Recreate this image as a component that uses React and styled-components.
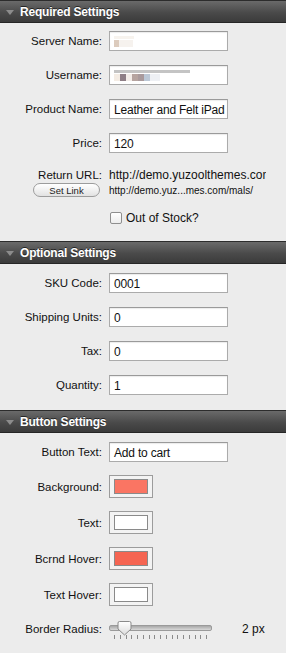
import React from "react";
import styled, { createGlobalStyle } from "styled-components";

const Global = createGlobalStyle`
  html, body {
    margin: 0;
    padding: 0;
    background: #ececec;
  }
  body {
    font-family: "Liberation Sans", Arial, sans-serif;
    color: #111;
  }
`;

const Panel = styled.div`
  width: 286px;
  min-height: 653px;
  background: #ececec;
`;

const Header = styled.div`
  display: flex;
  align-items: center;
  gap: 6px;
  height: 21px;
  padding-left: 6px;
  border-top: 1px solid #2c2c2c;
  border-bottom: 1px solid #262626;
  background: linear-gradient(#6a6a6a, #4a4a4a 55%, #3b3b3b);
  color: #fff;
  font-weight: bold;
  font-size: 12px;
  letter-spacing: -0.2px;
  text-shadow: 0 -1px 0 rgba(0, 0, 0, 0.6);
`;

const Triangle = styled.span`
  width: 0;
  height: 0;
  border-left: 4px solid transparent;
  border-right: 4px solid transparent;
  border-top: 5px solid #8c8c8c;
  margin-top: 1px;
`;

const Body = styled.div`
  display: flex;
  flex-direction: column;
  gap: ${({ gap }) => gap || 14}px;
  padding: ${({ top }) => top || 9}px 0 ${({ bottom }) => bottom || 15}px;
`;

const Row = styled.div`
  display: grid;
  grid-template-columns: 102px auto;
  column-gap: 7px;
  align-items: center;
`;

const Label = styled.div`
  text-align: right;
  font-size: 11.5px;
  white-space: nowrap;
`;

const Field = styled.div`
  box-sizing: border-box;
  width: 119px;
  height: 20px;
  display: flex;
  align-items: center;
  padding: 1px 3px 0 4px;
  background: #fff;
  border: 1px solid #ababab;
  border-top-color: #9a9a9a;
  box-shadow: inset 0 1px 1px rgba(0, 0, 0, 0.08);
  font-size: 12px;
  letter-spacing: -0.2px;
  color: #111;
  white-space: nowrap;
  overflow: hidden;
`;

const Pixel = styled.span`
  display: inline-block;
  width: ${({ w }) => w || 6}px;
  height: ${({ h }) => h || 8}px;
  background: ${({ c }) => c};
`;

const Censor = styled.div`
  display: flex;
  flex-direction: column;
  gap: 1px;
`;

const PixelRow = styled.div`
  display: flex;
`;

const UrlGrid = styled.div`
  display: grid;
  grid-template-columns: 102px 157px;
  grid-template-rows: 16px 14px;
  column-gap: 7px;
  align-items: center;
`;

const BigUrl = styled.div`
  font-size: 12px;
  white-space: nowrap;
  overflow: hidden;
`;

const SmallUrl = styled.div`
  font-size: 10px;
  white-space: nowrap;
`;

const PillButton = styled.div`
  justify-self: end;
  margin-right: 2px;
  box-sizing: border-box;
  width: 67px;
  height: 14px;
  border-radius: 7px;
  border: 1px solid #9c9c9c;
  background: linear-gradient(#ffffff, #f1f1f1 50%, #e2e2e2);
  font-size: 9.5px;
  display: flex;
  align-items: center;
  justify-content: center;
  color: #222;
`;

const CheckRow = styled.label`
  display: flex;
  align-items: center;
  gap: 4px;
  margin-left: 110px;
  font-size: 12px;
`;

const CheckBox = styled.span`
  box-sizing: border-box;
  width: 12px;
  height: 12px;
  border-radius: 2px;
  border: 1px solid #8e8e8e;
  background: linear-gradient(#ffffff, #ececec);
`;

const Well = styled.div`
  box-sizing: border-box;
  width: 44px;
  height: 23px;
  border: 1px solid #9c9c9c;
  background: #f3f3f3;
  display: flex;
  align-items: center;
  justify-content: center;
`;

const Swatch = styled.div`
  box-sizing: border-box;
  width: 34px;
  height: 15px;
  border: 1px solid #8a8a8a;
  background: ${({ color }) => color};
`;

const SliderWrap = styled.div`
  display: flex;
  align-items: center;
  gap: 30px;
`;

const Slider = styled.div`
  position: relative;
  width: 103px;
  height: 20px;
`;

const Track = styled.div`
  position: absolute;
  left: 0;
  right: 0;
  top: 6px;
  height: 4px;
  border-radius: 2px;
  border: 1px solid #9a9a9a;
  background: linear-gradient(#a8a8a8, #d8d8d8);
`;

const Thumb = styled.svg`
  position: absolute;
  left: 8px;
  top: 2px;
`;

const Ticks = styled.div`
  position: absolute;
  left: 5px;
  top: 16px;
  width: 93px;
  display: flex;
  justify-content: space-between;
`;

const Tick = styled.span`
  width: 1px;
  height: 4px;
  background: #8a8a8a;
`;

const Value = styled.div`
  font-size: 12px;
`;

const FieldRow = ({ label, children }) => (
  <Row>
    <Label>{label}</Label>
    <Field>{children}</Field>
  </Row>
);

const ColorRow = ({ label, color }) => (
  <Row>
    <Label>{label}</Label>
    <Well>
      <Swatch color={color} />
    </Well>
  </Row>
);

const Section = ({ title }) => (
  <Header>
    <Triangle />
    {title}
  </Header>
);

export default function App() {
  return (
    <Panel>
      <Global />
      <Section title="Required Settings" />
      <Body top={8} bottom={16}>
        <FieldRow label="Server Name:">
          <Censor>
            <PixelRow>
              <Pixel c="#f7f3ee" w={20} h={3} />
            </PixelRow>
            <PixelRow>
              <Pixel c="#dccbbd" w={5} h={7} />
              <Pixel c="#f6f2ee" w={14} h={7} />
            </PixelRow>
          </Censor>
        </FieldRow>
        <FieldRow label="Username:">
          <Censor>
            <PixelRow>
              <Pixel c="#c4c4c4" w={76} h={3} />
            </PixelRow>
            <PixelRow>
              <Pixel c="#f4ece4" w={6} h={7} />
              <Pixel c="#8e7e86" w={6} h={7} />
              <Pixel c="#f2ece8" w={6} h={7} />
              <Pixel c="#b6a4a0" w={6} h={7} />
              <Pixel c="#a99a9c" w={6} h={7} />
              <Pixel c="#bcc8d6" w={6} h={7} />
              <Pixel c="#eef0f4" w={10} h={7} />
            </PixelRow>
          </Censor>
        </FieldRow>
        <FieldRow label="Product Name:">Leather and Felt iPad</FieldRow>
        <FieldRow label="Price:">120</FieldRow>
        <UrlGrid>
          <Label>Return URL:</Label>
          <BigUrl>http://demo.yuzoolthemes.com/mals/</BigUrl>
          <PillButton>Set Link</PillButton>
          <SmallUrl>http://demo.yuz...mes.com/mals/</SmallUrl>
        </UrlGrid>
        <CheckRow>
          <CheckBox />
          Out of Stock?
        </CheckRow>
      </Body>

      <Section title="Optional Settings" />
      <Body>
        <FieldRow label="SKU Code:">0001</FieldRow>
        <FieldRow label="Shipping Units:">0</FieldRow>
        <FieldRow label="Tax:">0</FieldRow>
        <FieldRow label="Quantity:">1</FieldRow>
      </Body>

      <Section title="Button Settings" />
      <Body gap={13}>
        <FieldRow label="Button Text:">Add to cart</FieldRow>
        <ColorRow label="Background:" color="#fa7563" />
        <ColorRow label="Text:" color="#ffffff" />
        <ColorRow label="Bcrnd Hover:" color="#f56552" />
        <ColorRow label="Text Hover:" color="#ffffff" />
        <Row>
          <Label>Border Radius:</Label>
          <SliderWrap>
            <Slider>
              <Track />
              <Ticks>
                {Array.from({ length: 17 }).map((_, i) => (
                  <Tick key={i} />
                ))}
              </Ticks>
              <Thumb width="15" height="15" viewBox="0 0 15 15">
                <defs>
                  <linearGradient id="thumbFill" x1="0" y1="0" x2="0" y2="1">
                    <stop offset="0" stopColor="#ffffff" />
                    <stop offset="1" stopColor="#dcdcdc" />
                  </linearGradient>
                </defs>
                <path
                  d="M2.5 0.5 H12.5 Q14 0.5 14 2 V8 L7.5 14 L1 8 V2 Q1 0.5 2.5 0.5 Z"
                  fill="url(#thumbFill)"
                  stroke="#8a8a8a"
                />
              </Thumb>
            </Slider>
            <Value>2 px</Value>
          </SliderWrap>
        </Row>
      </Body>
    </Panel>
  );
}
